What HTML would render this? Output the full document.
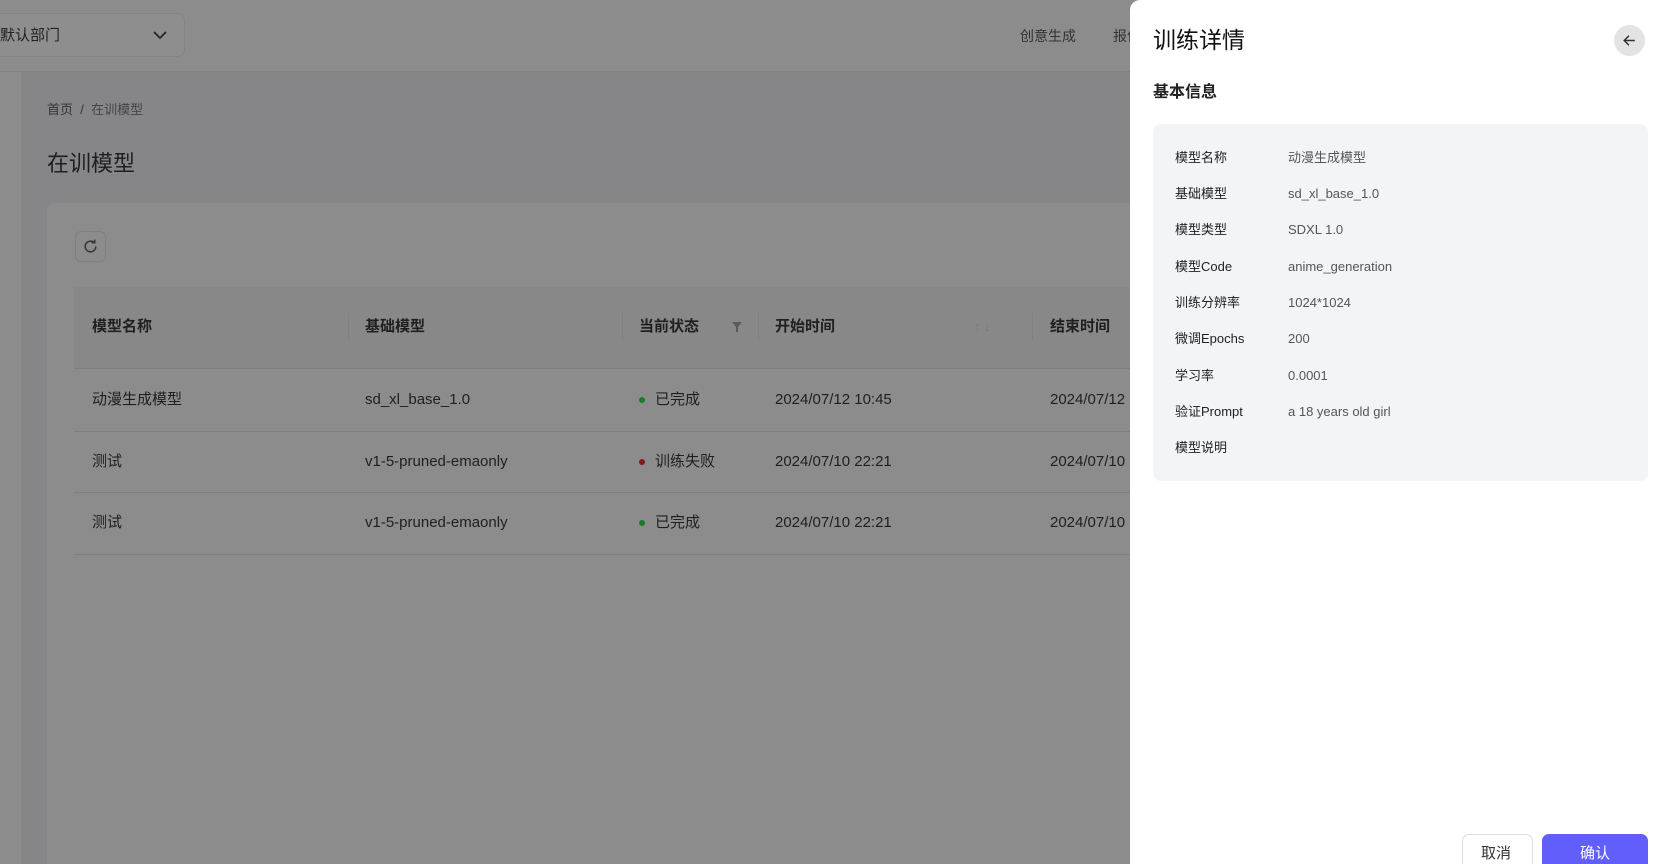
<!DOCTYPE html>
<html><head><meta charset="utf-8"><style>
*{margin:0;padding:0;box-sizing:border-box}
html,body{width:1670px;height:864px;overflow:hidden}
body{position:relative;font-family:"Liberation Sans","Noto Sans CJK SC",sans-serif;background:#868689;color:#1f1f1f;line-height:20px}
.abs{position:absolute}
.hdr{left:0;top:0;width:1670px;height:72px;background:#8c8c8c;border-bottom:1px solid #828282}
.side{left:0;top:72px;width:21px;height:792px;background:#8c8c8c}
.t{position:absolute;white-space:nowrap;line-height:20px}
.card{left:47px;top:203px;width:1200px;height:661px;background:#8c8c8c;border-radius:8px 8px 0 0}
.th{left:74px;top:287px;width:1100px;height:82px;background:#888888;border-bottom:1px solid #7e7e7e}
.rl{left:74px;width:1100px;height:1px;background:#808080}
.panel{left:1130px;top:0;width:540px;height:864px;background:#fff;border-radius:10px 0 0 0;overflow:hidden}
.lab{position:absolute;left:22px;font-size:13px;color:#1f1f1f;line-height:20px;white-space:nowrap}
.val{position:absolute;left:135px;font-size:13px;color:#555;line-height:20px;white-space:nowrap}
</style></head><body>
<div class="abs hdr"></div>
<div class="abs" style="left:-10px;top:13px;width:195px;height:44px;border:1px solid #848484;border-radius:8px;background:#8e8e8e"></div>
<div class="t" style="left:0;top:26px;font-size:15px;color:#222">默认部门</div>
<svg class="abs" style="left:152px;top:29px" width="16" height="12" viewBox="0 0 16 12"><path d="M2 3l6 6 6-6" stroke="#222" stroke-width="1.6" fill="none"/></svg>
<div class="t" style="left:1020px;top:26px;font-size:14px;color:#333">创意生成</div>
<div class="t" style="left:1113px;top:26px;font-size:14px;color:#333">报价</div>
<div class="abs side"></div>
<div class="t" style="left:47px;top:100px;font-size:13px;color:#333">首页 &nbsp;/&nbsp; <span style="color:#444">在训模型</span></div>
<div class="t" style="left:47px;top:151px;font-size:22px;line-height:26px;color:#1f1f1f">在训模型</div>
<div class="abs card"></div>
<div class="abs" style="left:75px;top:231px;width:31px;height:31px;border:1px solid #808080;border-radius:6px"></div>
<svg class="abs" style="left:82px;top:238px" width="17" height="17" viewBox="0 0 16 16"><path d="M13 8a5 5 0 1 1-1.5-3.6M12 1.5v3h-3" stroke="#333" stroke-width="1.4" fill="none"/></svg>
<div class="abs th"></div>
<div class="t" style="left:92px;top:317px;font-size:15px;font-weight:bold">模型名称</div>
<div class="t" style="left:365px;top:317px;font-size:15px;font-weight:bold">基础模型</div>
<div class="t" style="left:639px;top:317px;font-size:15px;font-weight:bold">当前状态</div>
<svg class="abs" style="left:731px;top:321px" width="12" height="12" viewBox="0 0 12 12"><path d="M1 1h10L7 6v5H5V6z" fill="#5a5a5a"/></svg>
<div class="t" style="left:775px;top:317px;font-size:15px;font-weight:bold">开始时间</div>
<div class="t" style="left:974px;top:317px;font-size:13px;color:#777">↑ ↓</div>
<div class="t" style="left:1050px;top:317px;font-size:15px;font-weight:bold">结束时间</div>
<div class="abs" style="left:348px;top:313px;width:1px;height:28px;background:#808080"></div>
<div class="abs" style="left:622px;top:313px;width:1px;height:28px;background:#808080"></div>
<div class="abs" style="left:758px;top:313px;width:1px;height:28px;background:#808080"></div>
<div class="abs" style="left:1032px;top:313px;width:1px;height:28px;background:#808080"></div>

<div class="t" style="left:92px;top:390px;font-size:15px">动漫生成模型</div>
<div class="t" style="left:365px;top:390px;font-size:15px">sd_xl_base_1.0</div>
<div class="t" style="left:639px;top:390px;font-size:15px"><span style="display:inline-block;width:6px;height:6px;border-radius:3px;background:#1a7a2a;margin-right:10px;vertical-align:middle"></span>已完成</div>
<div class="t" style="left:775px;top:390px;font-size:15px">2024/07/12 10:45</div>
<div class="t" style="left:1050px;top:390px;font-size:15px">2024/07/12</div>
<div class="abs rl" style="top:431px"></div>

<div class="t" style="left:92px;top:452px;font-size:15px">测试</div>
<div class="t" style="left:365px;top:452px;font-size:15px">v1-5-pruned-emaonly</div>
<div class="t" style="left:639px;top:452px;font-size:15px"><span style="display:inline-block;width:6px;height:6px;border-radius:3px;background:#8a1a1a;margin-right:10px;vertical-align:middle"></span>训练失败</div>
<div class="t" style="left:775px;top:452px;font-size:15px">2024/07/10 22:21</div>
<div class="t" style="left:1050px;top:452px;font-size:15px">2024/07/10</div>
<div class="abs rl" style="top:492px"></div>

<div class="t" style="left:92px;top:513px;font-size:15px">测试</div>
<div class="t" style="left:365px;top:513px;font-size:15px">v1-5-pruned-emaonly</div>
<div class="t" style="left:639px;top:513px;font-size:15px"><span style="display:inline-block;width:6px;height:6px;border-radius:3px;background:#1a7a2a;margin-right:10px;vertical-align:middle"></span>已完成</div>
<div class="t" style="left:775px;top:513px;font-size:15px">2024/07/10 22:21</div>
<div class="t" style="left:1050px;top:513px;font-size:15px">2024/07/10</div>
<div class="abs rl" style="top:554px"></div>

<div class="abs panel">
  <div class="t" style="left:23px;top:25px;font-size:23px;line-height:30px;color:#111">训练详情</div>
  <div class="abs" style="left:484px;top:25px;width:31px;height:31px;border-radius:50%;background:#e3e3e3"></div>
  <svg class="abs" style="left:491px;top:32px" width="17" height="17" viewBox="0 0 16 16"><path d="M13 8H3M7.5 3.5L3 8l4.5 4.5" stroke="#333" stroke-width="1.4" fill="none"/></svg>
  <div class="t" style="left:23px;top:83px;font-size:16px;font-weight:bold;color:#222">基本信息</div>
  <div class="abs" style="left:23px;top:124px;width:495px;height:357px;background:#f3f4f6;border-radius:8px">
    <div class="lab" style="top:24px">模型名称</div><div class="val" style="top:24px">动漫生成模型</div>
    <div class="lab" style="top:60px">基础模型</div><div class="val" style="top:60px">sd_xl_base_1.0</div>
    <div class="lab" style="top:96px">模型类型</div><div class="val" style="top:96px">SDXL 1.0</div>
    <div class="lab" style="top:133px">模型Code</div><div class="val" style="top:133px">anime_generation</div>
    <div class="lab" style="top:169px">训练分辨率</div><div class="val" style="top:169px">1024*1024</div>
    <div class="lab" style="top:205px">微调Epochs</div><div class="val" style="top:205px">200</div>
    <div class="lab" style="top:242px">学习率</div><div class="val" style="top:242px">0.0001</div>
    <div class="lab" style="top:278px">验证Prompt</div><div class="val" style="top:278px">a 18 years old girl</div>
    <div class="lab" style="top:314px">模型说明</div>
  </div>
  <div class="abs" style="left:332px;top:834px;width:71px;height:40px;border:1px solid #ddd;border-radius:7px;background:#fff"></div>
  <div class="t" style="left:351px;top:844px;font-size:15px;color:#333">取消</div>
  <div class="abs" style="left:412px;top:834px;width:106px;height:40px;border-radius:7px;background:#615efc"></div>
  <div class="t" style="left:450px;top:844px;font-size:15px;color:#fff">确认</div>
</div>
</body></html>
